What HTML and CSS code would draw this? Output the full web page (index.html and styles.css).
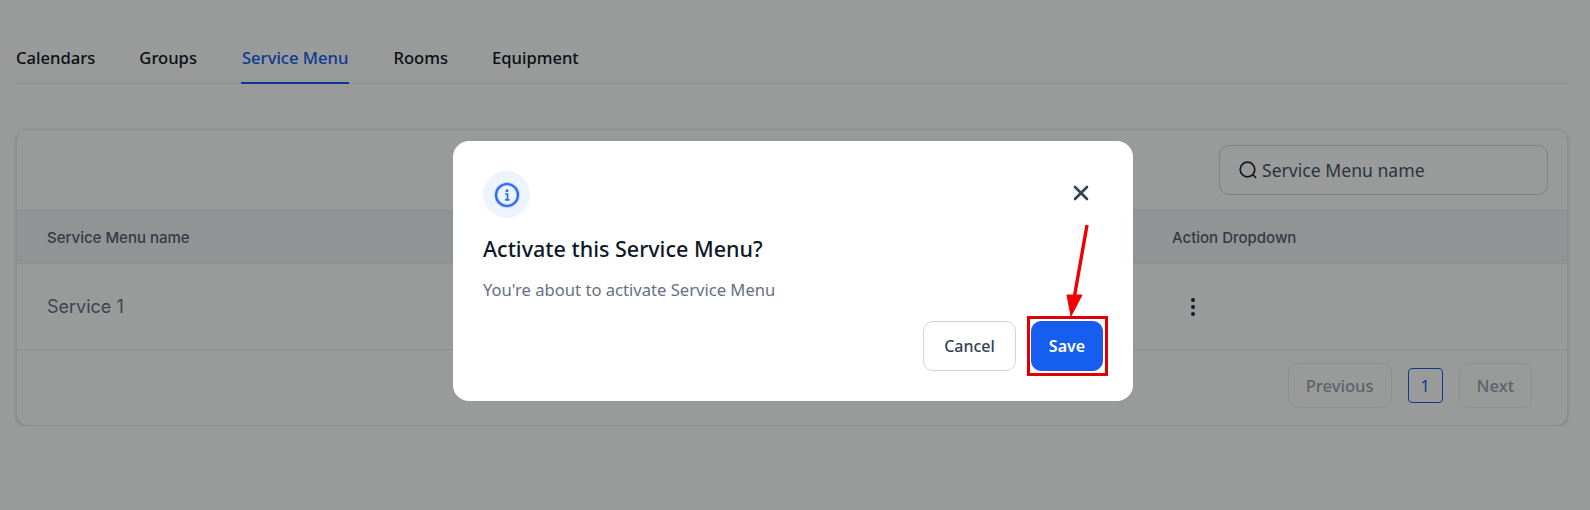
FILE: index.html
```html
<!doctype html>
<html>
<head>
<meta charset="utf-8">
<title>Service Menu</title>
<link rel="stylesheet" href="styles.css">
</head>
<body>
<div class="page">
  <nav class="tabs">
    <a class="tab">Calendars</a>
    <a class="tab">Groups</a>
    <a class="tab active">Service Menu</a>
    <a class="tab">Rooms</a>
    <a class="tab">Equipment</a>
  </nav>
  <div class="card">
    <div class="card-top">
      <div class="search">
        <svg width="20" height="20" viewBox="0 0 20 20" fill="none" stroke="#1d2939" stroke-width="1.7" stroke-linecap="round"><circle cx="9.5" cy="9.5" r="7.3"/><path d="M15 15l2.6 2.4"/></svg>
        <span>Service Menu name</span>
      </div>
    </div>
    <div class="row head">
      <div>Service Menu name</div>
      <div>Action Dropdown</div>
    </div>
    <div class="row body">
      <div>Service 1</div>
      <div class="dots"><i></i><i></i><i></i></div>
    </div>
    <div class="pager">
      <span class="page-btn off">Previous</span>
      <span class="page-num">1</span>
      <span class="page-btn off">Next</span>
    </div>
  </div>
</div>

<div class="overlay">
  <div class="modal">
    <div class="modal-head">
      <div class="info">
        <svg width="28" height="28" viewBox="0 0 28 28" fill="none"><circle cx="14" cy="14" r="11" stroke="#c7d9fd" stroke-width="4"/><circle cx="14" cy="14" r="11" stroke="#2f6bea" stroke-width="2.2"/><circle cx="14" cy="9.7" r="1.5" fill="#2f6bea"/><path d="M12.2 13h2.3v5.6M12 18.8h4.6" stroke="#2f6bea" stroke-width="1.7"/></svg>
      </div>
      <svg class="close" width="24" height="24" viewBox="0 0 24 24" fill="none" stroke="#344054" stroke-width="2.6" stroke-linecap="round"><path d="M6 6l12 12M18 6L6 18"/></svg>
    </div>
    <h2>Activate this Service Menu?</h2>
    <p>You're about to activate Service Menu</p>
    <div class="actions">
      <button class="btn cancel">Cancel</button>
      <button class="btn save">Save<span class="mark"></span></button>
    </div>
    <svg class="arrow" width="40" height="100" viewBox="0 0 40 100"><path d="M30 1L17 75" stroke="#f00000" stroke-width="3.4" fill="none"/><path d="M10 71L25 71 14 92z" fill="#f00000" stroke="#f00000"/></svg>
  </div>
</div>
</body>
</html>
```

FILE: styles.css
```css
* {
	box-sizing: border-box;
}
body {
	margin: 0;
	background: #fff;
	font-family: "Noto Sans", "Liberation Sans", sans-serif;
	color: #101828;
}
.page {
	padding: 0 22px 0 16px;
}
.tabs {
	display: flex;
	gap: 44px;
	height: 84px;
	padding-top: 46px;
	border-bottom: 1px solid #eaecf0;
}
.tab {
	font-size: 16.6px;
	font-weight: 500;
	line-height: 24px;
	height: 38px;
}
.tab.active {
	color: #155eef;
	border-bottom: 2px solid #155eef;
	padding: 0 1px;
}
.card {
	margin-top: 45px;
	height: 297px;
	background: #fff;
	border: 1px solid #eaecf0;
	border-radius: 12px;
	box-shadow: 0 1px 3px rgba(16, 24, 40, 0.2);
}
.card-top {
	display: flex;
	justify-content: flex-end;
	height: 80px;
	padding: 15px 19px 0 0;
}
.search {
	display: flex;
	align-items: center;
	gap: 4px;
	width: 329px;
	height: 50px;
	padding-left: 18px;
	border: 1px solid #d0d5dd;
	border-radius: 10px;
	font-size: 17.6px;
	color: #475467;
}
.row {
	display: grid;
	grid-template-columns: 1125px 1fr;
	padding-left: 30px;
	border-top: 1px solid #eaecf0;
	align-items: center;
	font-family: Inter, sans-serif;
}
.head {
	height: 53px;
	background: #f2f4f7;
	font-size: 15px;
	font-weight: 500;
	color: #525e72;
}
.body {
	height: 86px;
	font-size: 18px;
	color: #667085;
}
.dots {
	display: flex;
	flex-direction: column;
	gap: 3px;
	width: 42px;
	align-items: center;
}
.dots i {
	width: 4px;
	height: 4px;
	border-radius: 50%;
	background: #1d2939;
}
.pager {
	display: flex;
	justify-content: flex-end;
	align-items: center;
	gap: 16px;
	height: 72px;
	padding: 0 35px 0 0;
	border-top: 1px solid #eaecf0;
}
.page-btn {
	display: flex;
	align-items: center;
	justify-content: center;
	height: 45px;
	border: 1px solid #eaecf0;
	border-radius: 10px;
	font-size: 16.6px;
	font-weight: 500;
	color: #98a2b3;
	padding: 0 17px;
}
.page-num {
	display: flex;
	align-items: center;
	justify-content: center;
	width: 35px;
	height: 35px;
	border: 1px solid #155eef;
	border-radius: 4px;
	font-size: 16px;
	color: #155eef;
}
.overlay {
	position: fixed;
	inset: 0;
	background: rgba(0, 6, 2, 0.4);
	padding: 141px 0 0 453px;
}
.modal {
	position: relative;
	width: 680px;
	height: 260px;
	padding: 30px;
	background: #fff;
	border-radius: 16px;
}
.modal-head {
	display: flex;
	justify-content: space-between;
	align-items: center;
}
.info {
	display: flex;
	align-items: center;
	justify-content: center;
	width: 47px;
	height: 47px;
	border-radius: 50%;
	background: #edf3ff;
}
.close {
	margin: -4px 10px 0 0;
}
h2 {
	margin: 16px 0 0;
	font-size: 21.5px;
	font-weight: 500;
	line-height: 30px;
}
p {
	margin: 14px 0 0;
	font-size: 16.6px;
	line-height: 24px;
	color: #667085;
}
.actions {
	display: flex;
	justify-content: flex-end;
	gap: 15px;
	margin-top: 19px;
}
.btn {
	position: relative;
	height: 50px;
	border-radius: 10px;
	font-family: inherit;
	font-size: 16px;
	font-weight: 500;
}
.cancel {
	width: 93px;
	background: #fff;
	border: 1px solid #d0d5dd;
	color: #344054;
}
.save {
	width: 72px;
	background: #155eef;
	border: 1px solid #155eef;
	color: #fff;
	font-weight: 600;
}
.mark {
	position: absolute;
	inset: -6px -6px -6px -5px;
	border: 3px solid #e00000;
}
.arrow {
	position: absolute;
	left: 604px;
	top: 83px;
}
```
